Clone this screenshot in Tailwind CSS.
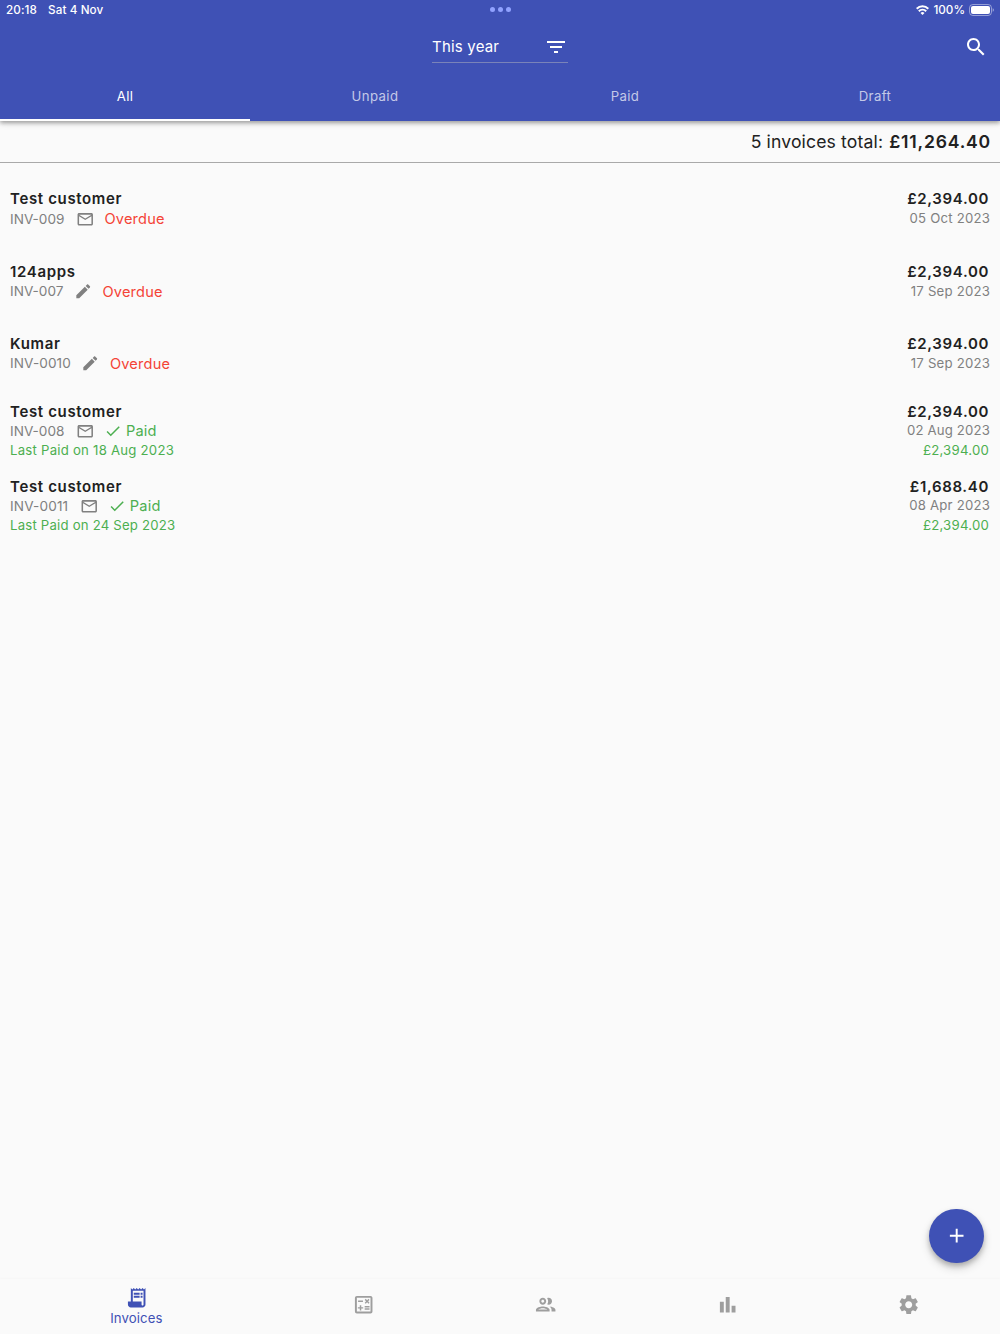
<!DOCTYPE html>
<html lang="en">
    <head>
        <meta charset="UTF-8">
        <meta name="viewport" content="width=device-width, initial-scale=1.0">
        <script src="https://cdn.jsdelivr.net/npm/@tailwindcss/browser@4"></script>
        <title>Invoices</title>
    </head>
    <body class="bg-[#fafafa] font-['Inter','Liberation_Sans',sans-serif] text-[#212121]">
        <!-- shared icons -->
        <svg class="hidden">
            <symbol id="mail" viewBox="0 0 24 24"><path d="M20 4H4c-1.1 0-1.99.9-1.99 2L2 18c0 1.1.9 2 2 2h16c1.1 0 2-.9 2-2V6c0-1.1-.9-2-2-2zm0 14H4V8l8 5 8-5v10zm-8-7L4 6h16l-8 5z"/></symbol>
            <symbol id="edit" viewBox="0 0 24 24"><path d="M3 17.25V21h3.75L17.81 9.94l-3.75-3.75L3 17.25zM20.71 7.04c.39-.39.39-1.02 0-1.41l-2.34-2.34c-.39-.39-1.02-.39-1.41 0l-1.83 1.83 3.75 3.75 1.83-1.83z"/></symbol>
            <symbol id="check" viewBox="0 0 24 24"><path d="M9 16.17L4.83 12l-1.42 1.41L9 19 21 7l-1.41-1.41z"/></symbol>
        </svg>

        <div class="flex h-[1334px] w-[1000px] flex-col overflow-hidden">
            <header class="z-10 flex h-[121px] shrink-0 flex-col bg-[#3f51b5] text-white shadow-[0_2px_4px_rgba(0,0,0,0.3),0_1px_8px_rgba(0,0,0,0.14)]">
                <div class="relative flex h-5 items-center justify-between pl-1.5 pr-1.5 text-[11.7px] font-medium">
                    <div class="flex gap-[11px] pt-0.5 tracking-[0.1px]"><span>20:18</span><span>Sat 4 Nov</span></div>
                    <div class="absolute left-[490px] top-[7px] flex gap-[3px]">
                        <i class="size-[5px] rounded-full bg-[#91a2ff]"></i>
                        <i class="size-[5px] rounded-full bg-[#91a2ff]"></i>
                        <i class="size-[5px] rounded-full bg-[#91a2ff]"></i>
                    </div>
                    <div class="flex items-center">
                        <svg class="mr-1 h-[10px] w-[13px]" viewBox="0 0 13 10" fill="none" stroke="white" stroke-width="2">
                            <path d="M.7 3.7a8.3 8.3 0 0 1 11.6 0M2.8 6.2a5.3 5.3 0 0 1 7.4 0"/>
                            <path d="M6.5 9.9 4.5 7.9a2.9 2.9 0 0 1 4 0z" fill="white" stroke="none"/>
                        </svg>
                        <span class="pt-0.5">100%</span>
                        <svg class="ml-1 h-3 w-[25px]" viewBox="0 0 25 12">
                            <rect x=".5" y=".5" width="22" height="11" rx="3.4" fill="none" stroke="white" stroke-opacity=".45"/>
                            <rect x="2" y="2" width="19" height="8" rx="2" fill="white"/>
                            <path d="M23.7 4.2v3.6c.7-.3 1.2-1 1.2-1.8s-.5-1.5-1.2-1.8z" fill="white" fill-opacity=".5"/>
                        </svg>
                    </div>
                </div>
                <div class="flex h-[54px] items-center pr-3">
                    <div class="flex-1"></div>
                    <div class="ml-3 flex h-8 w-[136px] items-center justify-between border-b border-[#7a83b9] text-[15px] tracking-[0.2px]">
                        <span class="pt-0.5">This year</span>
                        <svg class="size-[24px]" viewBox="0 0 24 24" fill="white"><path d="M10 18h4v-2h-4v2zM3 6v2h18V6H3zm3 7h12v-2H6v2z"/></svg>
                    </div>
                    <div class="flex flex-1 justify-end">
                        <svg class="size-[24px]" viewBox="0 0 24 24" fill="white"><path d="M15.5 14h-.79l-.28-.27C15.41 12.59 16 11.11 16 9.5 16 5.91 13.09 3 9.5 3S3 5.91 3 9.5 5.91 16 9.5 16c1.61 0 3.09-.59 4.23-1.57l.27.28v.79l5 4.99L20.49 19l-4.99-5zm-6 0C7.01 14 5 11.99 5 9.5S7.01 5 9.5 5 14 7.01 14 9.5 11.99 14 9.5 14z"/></svg>
                    </div>
                </div>
                <nav class="grid h-[47px] grid-cols-4 text-center text-[13.2px]/[45px] tracking-[0.4px]">
                    <a class="border-b-2 border-white">All</a>
                    <a class="text-white/70">Unpaid</a>
                    <a class="text-white/70">Paid</a>
                    <a class="text-white/70">Draft</a>
                </nav>
            </header>

            <div class="flex h-[42px] shrink-0 items-center justify-end gap-1.5 border-b border-[#a9a9a9] pr-[9px] pt-0.5 text-[17.6px] tracking-[0.14px]">
                <span>5 invoices total:</span><b class="font-semibold tracking-[0.8px]">£11,264.40</b>
            </div>

            <main class="flex-1 px-2.5 pt-[26.4px] text-[13.6px] text-[#808080]">
                <div class="flex h-[72.3px] justify-between">
                    <div>
                        <div class="text-[15px]/[20px] font-semibold tracking-[0.65px] text-[#212121]">Test customer</div>
                        <div class="flex h-[19px] items-center"><span>INV-009</span><svg class="ml-[11.5px] size-[18.5px]" fill="currentColor"><use href="#mail"/></svg><span class="ml-[10px] pt-[3px] text-[14.6px] tracking-[0.2px] text-[#f44336]">Overdue</span></div>
                    </div>
                    <div class="text-right">
                        <div class="pr-px text-[15px]/[20px] font-semibold tracking-[0.65px] text-[#212121]">£2,394.00</div>
                        <div class="text-[13.2px]/[19px] tracking-[0.2px]">05 Oct 2023</div>
                    </div>
                </div>
                <div class="flex h-[72.3px] justify-between">
                    <div>
                        <div class="text-[15px]/[20px] font-semibold tracking-[0.65px] text-[#212121]">124apps</div>
                        <div class="flex h-[19px] items-center"><span>INV-007</span><svg class="ml-[10.5px] size-[18.5px]" fill="currentColor"><use href="#edit"/></svg><span class="ml-[10px] pt-[3px] text-[14.6px] tracking-[0.2px] text-[#f44336]">Overdue</span></div>
                    </div>
                    <div class="text-right">
                        <div class="pr-px text-[15px]/[20px] font-semibold tracking-[0.65px] text-[#212121]">£2,394.00</div>
                        <div class="text-[13.2px]/[19px] tracking-[0.2px]">17 Sep 2023</div>
                    </div>
                </div>
                <div class="flex h-[68px] justify-between">
                    <div>
                        <div class="text-[15px]/[20px] font-semibold tracking-[0.65px] text-[#212121]">Kumar</div>
                        <div class="flex h-[19px] items-center"><span class="tracking-[0.1px]">INV-0010</span><svg class="ml-[10.5px] size-[18.5px]" fill="currentColor"><use href="#edit"/></svg><span class="ml-[10px] pt-[3px] text-[14.6px] tracking-[0.2px] text-[#f44336]">Overdue</span></div>
                    </div>
                    <div class="text-right">
                        <div class="pr-px text-[15px]/[20px] font-semibold tracking-[0.65px] text-[#212121]">£2,394.00</div>
                        <div class="text-[13.2px]/[19px] tracking-[0.2px]">17 Sep 2023</div>
                    </div>
                </div>
                <div class="flex h-[75.3px] justify-between">
                    <div>
                        <div class="text-[15px]/[20px] font-semibold tracking-[0.65px] text-[#212121]">Test customer</div>
                        <div class="flex h-[17.6px] items-center"><span>INV-008</span><svg class="ml-[11.5px] size-[18.5px]" fill="currentColor"><use href="#mail"/></svg><svg class="ml-[9.5px] size-[18px] text-[#4caf50]" fill="currentColor"><use href="#check"/></svg><span class="ml-1 pt-0.5 text-[14.6px] tracking-[0.2px] text-[#4caf50]">Paid</span></div>
                        <div class="text-[13.2px]/[21.5px] tracking-[0.23px] text-[#4caf50]">Last Paid on 18 Aug 2023</div>
                    </div>
                    <div class="text-right">
                        <div class="pr-px text-[15px]/[20px] font-semibold tracking-[0.65px] text-[#212121]">£2,394.00</div>
                        <div class="text-[13.2px]/[17px] tracking-[0.15px]">02 Aug 2023</div>
                        <div class="pr-px text-[13.2px]/[22.5px] tracking-[0.23px] text-[#4caf50]">£2,394.00</div>
                    </div>
                </div>
                <div class="flex justify-between">
                    <div>
                        <div class="text-[15px]/[20px] font-semibold tracking-[0.65px] text-[#212121]">Test customer</div>
                        <div class="flex h-[17.6px] items-center"><span class="tracking-[0.15px]">INV-0011</span><svg class="ml-[11.5px] size-[18.5px]" fill="currentColor"><use href="#mail"/></svg><svg class="ml-[9.5px] size-[18px] text-[#4caf50]" fill="currentColor"><use href="#check"/></svg><span class="ml-1 pt-0.5 text-[14.6px] tracking-[0.2px] text-[#4caf50]">Paid</span></div>
                        <div class="text-[13.2px]/[21.5px] tracking-[0.2px] text-[#4caf50]">Last Paid on 24 Sep 2023</div>
                    </div>
                    <div class="text-right">
                        <div class="pr-px text-[15px]/[20px] font-semibold tracking-[0.65px] text-[#212121]">£1,688.40</div>
                        <div class="text-[13.2px]/[17px] tracking-[0.2px]">08 Apr 2023</div>
                        <div class="pr-px text-[13.2px]/[22.5px] tracking-[0.23px] text-[#4caf50]">£2,394.00</div>
                    </div>
                </div>
            </main>

            <!-- floating add button -->
            <button class="absolute left-[929.3px] top-[1208.6px] flex size-[54.7px] items-center justify-center rounded-full bg-[#3f51b5] shadow-[0_3px_5px_rgba(0,0,0,0.2),0_5px_10px_rgba(0,0,0,0.16)]">
                <svg class="size-[23.4px]" viewBox="0 0 24 24" fill="white"><path d="M19 13h-6v6h-2v-6H5v-2h6V5h2v6h6v2z"/></svg>
            </button>

            <footer class="grid h-[55px] shrink-0 grid-cols-[1.5fr_1fr_1fr_1fr_1fr] place-items-center bg-[#fafafa] pb-[3px] text-[#9e9e9e] shadow-[0_-1px_2px_rgba(0,0,0,0.02)]">
                <a class="flex flex-col items-center pt-0.5 text-[#3f51b5]">
                    <svg class="size-[23.4px]" viewBox="0 0 24 24" fill="currentColor"><path d="M19.5 3.5 18 2l-1.5 1.5L15 2l-1.5 1.5L12 2l-1.5 1.5L9 2 7.5 3.5 6 2v14H3v3c0 1.66 1.34 3 3 3h12c1.66 0 3-1.34 3-3V2l-1.5 1.5zM19 19c0 .55-.45 1-1 1s-1-.45-1-1v-3H8V5h11v14zM9 7h6v2H9zM16 7h2v2h-2zM9 10h6v2H9zM16 10h2v2h-2z"/></svg>
                    <span class="text-[13.2px]/[16px] tracking-[0.1px]">Invoices</span>
                </a>
                <svg class="size-[23.4px]" viewBox="0 0 24 24" fill="currentColor"><path d="M19 3H5c-1.1 0-2 .9-2 2v14c0 1.1.9 2 2 2h14c1.1 0 2-.9 2-2V5c0-1.1-.9-2-2-2zm0 16H5V5h14v14zM6.25 7.72h5v1.5h-5zM13 15.75h5v1.5h-5zM13 13.25h5v1.5h-5zM8 18h1.5v-2h2v-1.5h-2v-2H8v2H6V16h2zM14.09 10.95l1.41-1.41 1.41 1.41 1.06-1.06-1.41-1.42 1.41-1.41L16.91 6 15.5 7.41 14.09 6l-1.06 1.06 1.41 1.41-1.41 1.42z"/></svg>
                <svg class="size-[23.4px]" viewBox="0 0 24 24" fill="currentColor"><path d="M9 13.75c-2.34 0-7 1.17-7 3.5V19h14v-1.75c0-2.33-4.66-3.5-7-3.5zM4.34 17c.84-.58 2.87-1.25 4.66-1.25s3.82.67 4.66 1.25H4.34zM9 12c1.93 0 3.5-1.57 3.5-3.5S10.93 5 9 5 5.5 6.57 5.5 8.5 7.07 12 9 12zm0-5c.83 0 1.5.67 1.5 1.5S9.83 10 9 10s-1.5-.67-1.5-1.5S8.17 7 9 7zm7.04 6.81c1.16.84 1.96 1.96 1.96 3.44V19h4v-1.75c0-2.02-3.5-3.17-5.96-3.44zM15 12c1.93 0 3.5-1.57 3.5-3.5S16.93 5 15 5c-.54 0-1.04.13-1.5.35.63.89 1 1.98 1 3.15s-.37 2.26-1 3.15c.46.22.96.35 1.5.35z"/></svg>
                <svg class="size-[23.4px]" viewBox="0 0 24 24" fill="currentColor"><path d="M4 9h4v11H4zM16 13h4v7h-4zM10 4h4v16h-4z"/></svg>
                <svg class="size-[23.4px]" viewBox="0 0 24 24" fill="currentColor"><path d="M19.14 12.94c.04-.3.06-.61.06-.94 0-.32-.02-.64-.07-.94l2.03-1.58c.18-.14.23-.41.12-.61l-1.92-3.32c-.12-.22-.37-.29-.59-.22l-2.39.96c-.5-.38-1.03-.7-1.62-.94l-.36-2.54c-.04-.24-.24-.41-.48-.41h-3.84c-.24 0-.43.17-.47.41l-.36 2.54c-.59.24-1.13.57-1.62.94l-2.39-.96c-.22-.08-.47 0-.59.22L2.74 8.87c-.12.21-.08.47.12.61l2.03 1.58c-.05.3-.09.63-.09.94s.02.64.07.94l-2.03 1.58c-.18.14-.23.41-.12.61l1.92 3.32c.12.22.37.29.59.22l2.39-.96c.5.38 1.03.7 1.62.94l.36 2.54c.05.24.24.41.48.41h3.84c.24 0 .44-.17.47-.41l.36-2.54c.59-.24 1.13-.56 1.62-.94l2.39.96c.22.08.47 0 .59-.22l1.92-3.32c.12-.22.07-.47-.12-.61l-2.01-1.58zM12 15.6c-1.98 0-3.6-1.62-3.6-3.6s1.62-3.6 3.6-3.6 3.6 1.62 3.6 3.6-1.62 3.6-3.6 3.6z"/></svg>
            </footer>
        </div>
    </body>
</html>
